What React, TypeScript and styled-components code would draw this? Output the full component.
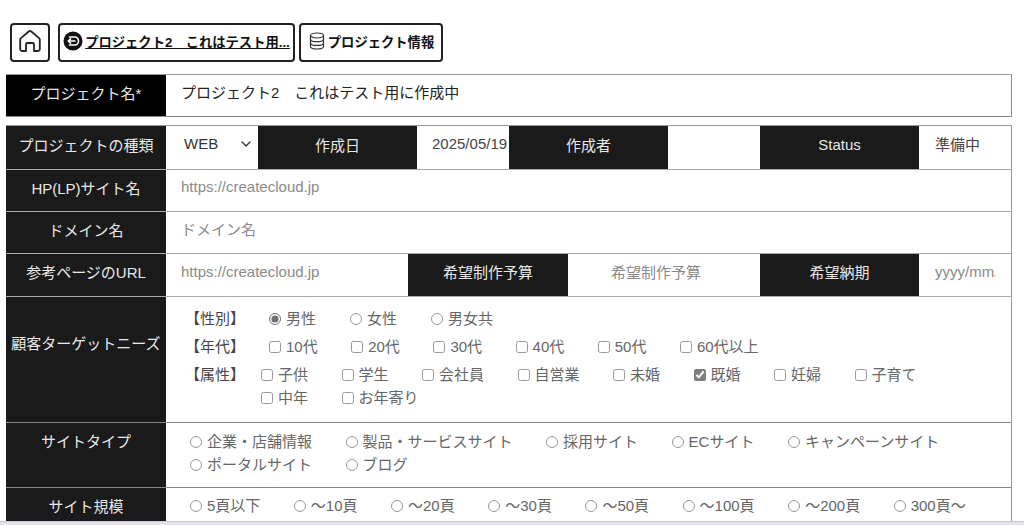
import React from 'react';
import styled, { createGlobalStyle } from 'styled-components';
import { ChevronDown } from 'lucide-react';

const GlobalStyle = createGlobalStyle`
  html, body {
    margin: 0;
    padding: 0;
    background: #fff;
  }
  body {
    font-family: "Liberation Sans", "Noto Sans CJK JP", sans-serif;
    color: #555;
    overflow: hidden;
  }
`;

const Page = styled.div`
  width: 1024px;
  height: 525px;
  overflow: hidden;
  display: flex;
  flex-direction: column;
`;

const Content = styled.main`
  flex: 1;
  min-height: 0;
  overflow: hidden;
  padding: 23px 12px 0 6px;
`;

const Toolbar = styled.nav`
  display: flex;
  align-items: stretch;
  height: 39px;
  padding-left: 4px;
  margin-bottom: 12px;
`;

const ToolButton = styled.a<{ $width: number; $gap: number }>`
  box-sizing: border-box;
  width: ${(props) => props.$width}px;
  margin-right: ${(props) => props.$gap}px;
  padding-bottom: 3px;
  display: flex;
  align-items: center;
  justify-content: center;
  gap: 2px;
  border: 2px solid #222;
  border-radius: 4px;
  color: #111;
  font-size: 13.300px;
  font-weight: 700;
  white-space: nowrap;
`;

const ToolLabel = styled.span<{ $underline?: boolean }>`
  text-decoration: ${(props) => (props.$underline ? 'underline' : 'none')};
`;

const NameRow = styled.section`
  box-sizing: border-box;
  height: 43px;
  margin-bottom: 8px;
  display: flex;
  border: 1px solid #8a8a8a;
  border-left: 0;
  border-top-color: #999;
`;

const Table = styled.section`
  border-top: 1px solid #999;
  border-right: 1px solid #999;
`;

const Row = styled.div<{ $columns: string; $height: number; $line?: string }>`
  box-sizing: border-box;
  height: ${(props) => props.$height}px;
  display: grid;
  grid-template-columns: ${(props) => props.$columns};
  border-bottom: 1px solid ${(props) => props.$line ?? '#aaa'};
`;

const Label = styled.div<{ $black?: boolean; $top?: number; $wide?: boolean }>`
  box-sizing: border-box;
  width: ${(props) => (props.$wide ? '160px' : 'auto')};
  flex-shrink: 0;
  display: flex;
  justify-content: center;
  align-items: ${(props) => (props.$top !== undefined ? 'flex-start' : 'center')};
  padding-top: ${(props) => props.$top ?? 0}px;
  padding-bottom: ${(props) => (props.$top !== undefined ? 0 : 7)}px;
  background: ${(props) => (props.$black ? '#000' : '#1a1a1a')};
  color: #e8e8e8;
  font-size: 15px;
  white-space: nowrap;
`;

const Value = styled.div<{ $center?: boolean; $dim?: boolean; $pad?: number; $padRight?: number }>`
  display: flex;
  align-items: center;
  justify-content: ${(props) => (props.$center ? 'center' : 'flex-start')};
  padding-left: ${(props) => props.$pad ?? 15}px;
  padding-right: ${(props) => props.$padRight ?? 0}px;
  padding-bottom: 8px;
  overflow: hidden;
  font-size: 15px;
  white-space: nowrap;
  color: ${(props) => (props.$dim ? '#8a8a8a' : '#444')};
`;

const NameValue = styled(Value)`
  color: #222;
`;

const SelectValue = styled(Value)`
  justify-content: space-between;
  padding-left: 18px;
  padding-right: 4px;
  color: #333;
`;

const DateInput = styled.span`
  width: 60px;
  overflow: hidden;
`;

const OptionsCell = styled.div<{ $pad: string; $lineHeight?: number }>`
  padding: ${(props) => props.$pad};
  font-size: 15px;
  line-height: ${(props) => props.$lineHeight ?? 23}px;
`;

const Group = styled.div<{ $height: number }>`
  display: flex;
  height: ${(props) => props.$height}px;
`;

const GroupTitle = styled.div<{ $width: number }>`
  box-sizing: border-box;
  flex-shrink: 0;
  width: ${(props) => props.$width}px;
  padding-right: 18px;
  color: #444;
`;

const Options = styled.div<{ $gap: number }>`
  display: flex;
  flex-wrap: wrap;
  column-gap: ${(props) => props.$gap}px;
`;

const Option = styled.label`
  display: inline-flex;
  align-items: center;
  gap: 5px;
  height: 23px;
  color: #666;
  white-space: nowrap;
`;

const Radio = styled.input.attrs({ type: 'radio', readOnly: true })`
  width: 12px;
  height: 12px;
  margin: 0;
  accent-color: #444;
  opacity: 0.75;
`;

const Tick = styled.input.attrs({ type: 'checkbox', readOnly: true })`
  width: 12px;
  height: 12px;
  margin: 0;
  accent-color: #555;
  opacity: 0.75;
`;

const WindowEdge = styled.div`
  height: 3px;
  flex-shrink: 0;
  background: #e4e2ec;
  border-top: 1px solid #c9c8d2;
`;

const HomeIcon = () => (
  <svg width="24" height="24" viewBox="0 0 24 24" fill="none" stroke="#222" strokeWidth="1.800" strokeLinecap="round" strokeLinejoin="round">
    <path d="M8 22H4A1.800 1.800 0 0 1 2.200 20.200V10.600A2 2 0 0 1 2.900 9.100L10.700 2.500A2 2 0 0 1 13.300 2.500L21.100 9.100A2 2 0 0 1 21.800 10.600V20.200A1.800 1.800 0 0 1 20 22H16V15.500A1.500 1.500 0 0 0 14.500 14H9.500A1.500 1.500 0 0 0 8 15.500Z" />
  </svg>
);

const BackIcon = () => (
  <svg width="20" height="20" viewBox="0 0 20 20">
    <circle cx="10" cy="10" r="9.500" fill="#111" />
    <path d="M6.500 6H11.500A4 4 0 0 1 11.500 14H6.500M5.200 10H12M7.500 7.900 5.200 10 7.500 12.100" fill="none" stroke="#fff" strokeWidth="1.600" strokeLinecap="round" strokeLinejoin="round" />
  </svg>
);

const DatabaseIcon = () => (
  <svg width="18" height="18" viewBox="0 0 18 18" fill="none" stroke="#333" strokeWidth="1.200" strokeLinecap="round">
    <ellipse cx="9" cy="3.500" rx="6.500" ry="2.500" />
    <path d="M2.500 3.500V14.500C2.500 15.900 5.400 17 9 17S15.500 15.900 15.500 14.500V3.500" />
    <path d="M2.500 7.200C2.500 8.600 5.400 9.700 9 9.700S15.500 8.600 15.500 7.200" />
    <path d="M2.500 10.900C2.500 12.300 5.400 13.400 9 13.400S15.500 12.300 15.500 10.900" />
  </svg>
);

const genders = ['男性', '女性', '男女共'];
const ages = ['10代', '20代', '30代', '40代', '50代', '60代以上'];
const attributes = ['子供', '学生', '会社員', '自営業', '未婚', '既婚', '妊婦', '子育て', '中年', 'お年寄り'];
const siteTypes = ['企業・店舗情報', '製品・サービスサイト', '採用サイト', 'ECサイト', 'キャンペーンサイト', 'ポータルサイト', 'ブログ'];
const siteSizes = ['5頁以下', '～10頁', '～20頁', '～30頁', '～50頁', '～100頁', '～200頁', '300頁～'];

const App: React.FC = () => {
  return (
    <Page>
      <GlobalStyle />
      <Content>
        <Toolbar>
          <ToolButton $width={40} $gap={8}>
            <HomeIcon />
          </ToolButton>
          <ToolButton $width={237} $gap={4}>
            <BackIcon />
            <ToolLabel $underline>プロジェクト2　これはテスト用...</ToolLabel>
          </ToolButton>
          <ToolButton $width={144} $gap={0}>
            <DatabaseIcon />
            <ToolLabel>プロジェクト情報</ToolLabel>
          </ToolButton>
        </Toolbar>

        <NameRow>
          <Label $black $wide>プロジェクト名*</Label>
          <NameValue>プロジェクト2　これはテスト用に作成中</NameValue>
        </NameRow>

        <Table>
          <Row $columns="160px 92px 159px 92px 159px 92px 159px 1fr" $height={44}>
            <Label>プロジェクトの種類</Label>
            <SelectValue>
              WEB
              <ChevronDown size={16} color="#333" />
            </SelectValue>
            <Label>作成日</Label>
            <Value>2025/05/19</Value>
            <Label>作成者</Label>
            <Value />
            <Label>Status</Label>
            <Value $pad={16}>準備中</Value>
          </Row>
          <Row $columns="160px 1fr" $height={42}>
            <Label>HP(LP)サイト名</Label>
            <Value $dim>https://createcloud.jp</Value>
          </Row>
          <Row $columns="160px 1fr" $height={42}>
            <Label>ドメイン名</Label>
            <Value $dim>ドメイン名</Value>
          </Row>
          <Row $columns="160px 242px 160px 192px 159px 1fr" $height={43}>
            <Label>参考ページのURL</Label>
            <Value $dim>https://createcloud.jp</Value>
            <Label>希望制作予算</Label>
            <Value $dim $center $pad={0} $padRight={16}>希望制作予算</Value>
            <Label>希望納期</Label>
            <Value $dim $pad={16}>
              <DateInput>yyyy/mm/dd</DateInput>
            </Value>
          </Row>
          <Row $columns="160px 1fr" $height={126} $line="#888">
            <Label $top={35}>顧客ターゲットニーズ</Label>
            <OptionsCell $pad="10px 80px 0 19px">
              <Group $height={28}>
                <GroupTitle $width={84}>【性別】</GroupTitle>
                <Options $gap={34}>
                  {genders.map((gender, index) => (
                    <Option key={gender}>
                      <Radio name="gender" defaultChecked={index === 0} />
                      {gender}
                    </Option>
                  ))}
                </Options>
              </Group>
              <Group $height={28}>
                <GroupTitle $width={84}>【年代】</GroupTitle>
                <Options $gap={33.500}>
                  {ages.map((age) => (
                    <Option key={age}>
                      <Tick />
                      {age}
                    </Option>
                  ))}
                </Options>
              </Group>
              <Group $height={46}>
                <GroupTitle $width={76}>【属性】</GroupTitle>
                <Options $gap={33.500}>
                  {attributes.map((attribute) => (
                    <Option key={attribute}>
                      <Tick defaultChecked={attribute === '既婚'} />
                      {attribute}
                    </Option>
                  ))}
                </Options>
              </Group>
            </OptionsCell>
          </Row>
          <Row $columns="160px 1fr" $height={65} $line="#888">
            <Label $top={7}>サイトタイプ</Label>
            <OptionsCell $pad="7px 60px 0 24px">
              <Options $gap={33.500}>
                {siteTypes.map((siteType) => (
                  <Option key={siteType}>
                    <Radio name="siteType" />
                    {siteType}
                  </Option>
                ))}
              </Options>
            </OptionsCell>
          </Row>
          <Row $columns="160px 1fr" $height={36} $line="#888">
            <Label $top={7}>サイト規模</Label>
            <OptionsCell $pad="6px 0 0 24px">
              <Options $gap={33.500}>
                {siteSizes.map((siteSize) => (
                  <Option key={siteSize}>
                    <Radio name="siteSize" />
                    {siteSize}
                  </Option>
                ))}
              </Options>
            </OptionsCell>
          </Row>
        </Table>
      </Content>
      <WindowEdge />
    </Page>
  );
};

export default App;
